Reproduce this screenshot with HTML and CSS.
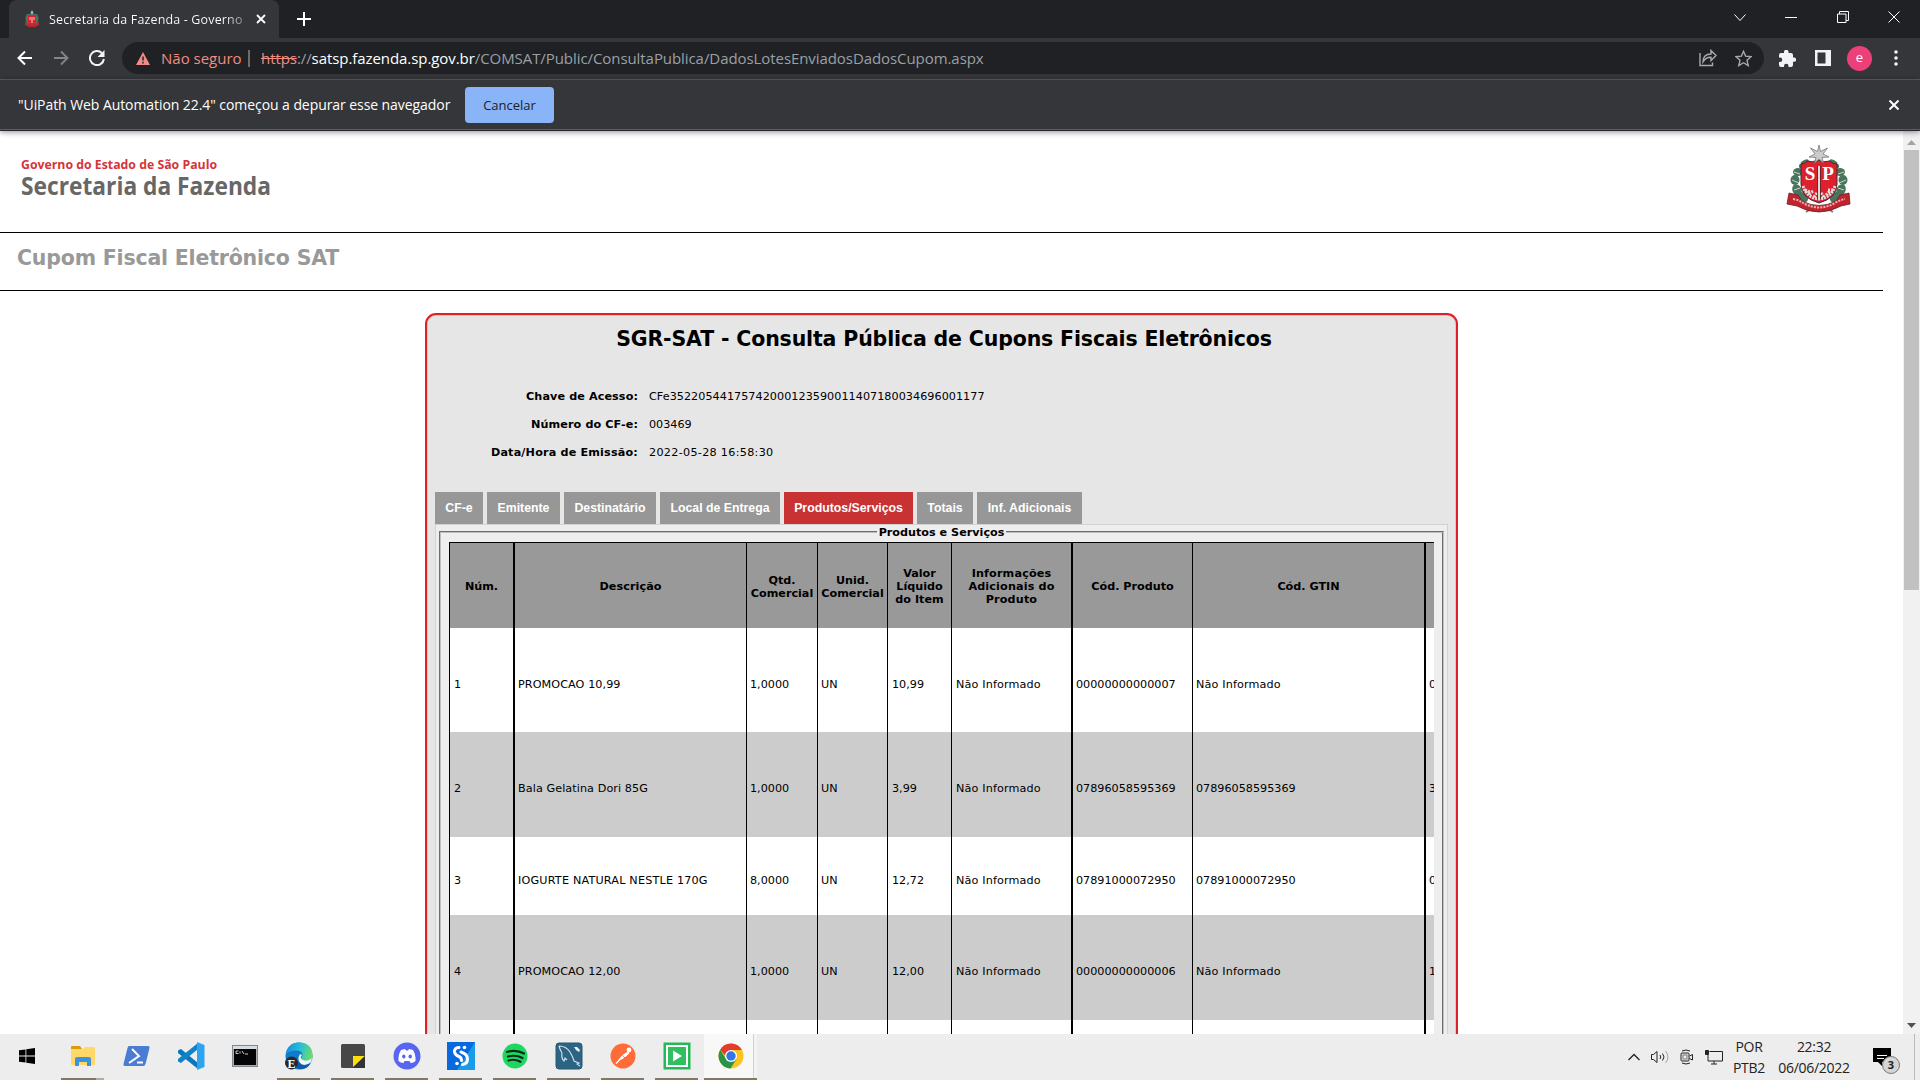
FILE: index.html
```html
<!DOCTYPE html>
<html lang="pt-BR">
<head>
<meta charset="utf-8">
<title>Secretaria da Fazenda - Governo</title>
<link rel="stylesheet" href="styles.css">
</head>
<body>
<svg width="0" height="0" class="defs">
  <symbol id="crest" viewBox="0 0 66 72">
    <g fill="#48755c"><ellipse cx="18" cy="20" rx="6" ry="3.4" transform="rotate(-40 18 20)"/><ellipse cx="12" cy="28" rx="5" ry="4"/><ellipse cx="9" cy="36" rx="4.500" ry="5"/><ellipse cx="11" cy="46" rx="4.500" ry="6" transform="rotate(-25 11 46)"/><ellipse cx="17" cy="53" rx="4" ry="6" transform="rotate(-45 17 53)"/><ellipse cx="48" cy="20" rx="6" ry="3.400" transform="rotate(40 48 20)"/><ellipse cx="54" cy="28" rx="5" ry="4"/><ellipse cx="57" cy="36" rx="4.500" ry="5"/><ellipse cx="55" cy="46" rx="4.500" ry="6" transform="rotate(25 55 46)"/><ellipse cx="49" cy="53" rx="4" ry="6" transform="rotate(45 49 53)"/></g>
    <g fill="none" stroke="#c5d4c7" stroke-width="1"><path d="M14 19l4 5M8 28l6 2M6 36l7 3M8 46l6-2M52 19l-4 5M58 28l-6 2M60 36l-7 3M58 46l-6-2"/></g>
    <path d="M15 20q4 0 6-3q5 2 11-1q6 3 12 1q2 3 7 3v20q0 14-18 19Q15 54 15 40z" fill="#dc202e" stroke="#3d3034" stroke-width="1"/>
    <path d="M17 42q4 12 16 13q12-1 16-13M19 46l5 2M23 50l4-3M42 46l5 0M40 51l4-4M28 53l3-4M38 53l-3-4" stroke="#ddd" stroke-width="3" fill="none" stroke-dasharray="2 1"/>
    <path d="M33 22v33" stroke="#48282c" stroke-width="3.500"/><path d="M33 22v33" stroke="#eee" stroke-width="1.800"/>
    <text x="24" y="36" class="crest-letter">S</text><text x="42" y="36" class="crest-letter">P</text>
    <path d="M33 1l1.500 6.500 7-3.500-4.500 6 6 3-7 .5 1.500 5.500-4.500-4-4.500 4 1.500-5.500-7-.5 6-3-4.500-6 7 3.500z" fill="#c9cbcd" stroke="#777" stroke-width=".8"/>
    <path d="M20 68l8-5 5 3 6-3 8 5" fill="none" stroke="#718575" stroke-width="2"/>
    <path d="M3 49l9 2 4 6q17 9 34 0l4-6 9-2 1 11-9 2q-22 12-44 0l-10-2z" fill="#c0242e" stroke="#6d1f26" stroke-width=".8"/>
    <path d="M7 55q6 1 10 4 16 9 32 0 5-3 10-4" fill="none" stroke="#f3b4b8" stroke-width="2" stroke-dasharray="2 1.200"/>
  </symbol>
</svg>
<div class="screen">
  <header class="tabstrip">
    <div class="tab">
      <svg class="favicon" width="16" height="18" viewBox="0 0 16 18"><path d="M3 4Q0 9 3 14l3 2h4l3-2q3-5 0-10z" fill="#48755c"/><path d="M4 5h8v6q0 3-4 5-4-2-4-5z" fill="#dc202e"/><path d="M6 7v3M8 7v6M10 7v3" stroke="#f5c8cb"/><path d="M8 0l1.500 3-1.500 1.500L6.500 3z" fill="#b9bbbd"/><path d="M1 12l4 2.500h6L15 12v3l-4 2H5l-4-2z" fill="#c0242e"/></svg>
      <span class="tab-title">Secretaria da Fazenda - Governo</span>
      <svg width="10" height="10" viewBox="0 0 10 10" class="s-white"><path d="M1 1l8 8M9 1l-8 8" stroke-width="1.800"/></svg>
    </div>
    <svg class="plus s-white" width="14" height="14" viewBox="0 0 14 14"><path d="M7 0v14M0 7h14" stroke-width="2"/></svg>
    <div class="winctl">
      <svg width="12" height="12" viewBox="0 0 12 12" class="s-white"><path d="M.5 3.500l5.500 6 5.500-6"/></svg>
      <svg width="12" height="12" viewBox="0 0 12 12" class="s-white"><path d="M0 6.500h12"/></svg>
      <svg width="12" height="12" viewBox="0 0 12 12" class="s-white"><path d="M.5 3h8.500v8.500h-8.500zM2.500 3v-2.500h9v9h-2.500"/></svg>
      <svg width="12" height="12" viewBox="0 0 12 12" class="s-white"><path d="M.5.5l11 11M11.500.5l-11 11"/></svg>
    </div>
  </header>
  <div class="toolbar">
    <div class="nav">
      <svg width="16" height="16" viewBox="0 0 16 16" class="s-white"><path d="M15 8H2M8 1.500L1.500 8 8 14.500" stroke-width="2"/></svg>
      <svg width="16" height="16" viewBox="0 0 16 16" class="s-dim"><path d="M1 8h13M8 1.500l6.500 6.500-6.500 6.500" stroke-width="1.800"/></svg>
      <svg width="16" height="16" viewBox="0 0 16 16"><path d="M13 3.200A7 7 0 1 0 14.900 9" fill="none" stroke="#f1f3f4" stroke-width="2"/><path d="M15.500 0v7h-7z" fill="#f1f3f4"/></svg>
    </div>
    <div class="omnibox">
      <svg width="14" height="13" viewBox="0 0 14 13"><path d="M7 0l7 13H0z" fill="#f28b82"/><path d="M7 4.500v4M7 9.800v1.600" stroke="#202124" stroke-width="1.500"/></svg>
      <span class="unsafe">Não seguro</span><i class="vbar"></i>
      <span class="url"><s>https</s>://<b>satsp.fazenda.sp.gov.br</b>/COMSAT/Public/ConsultaPublica/DadosLotesEnviadosDadosCupom.aspx</span>
      <svg class="share" width="18" height="18" viewBox="0 0 18 18"><path d="M1 4v12.500h12.500v-3M4 13q0-8 8-8V1.500l5 5-5 5V8.300q-5-.3-8 4.700z"/></svg>
      <svg class="star" width="17" height="17" viewBox="0 0 17 17"><path d="M8.500 1.300l2.100 4.900 5.400.5-4 3.600 1.200 5.200-4.700-2.800-4.700 2.800L5 10.300 1 6.700l5.400-.5z"/></svg>
    </div>
    <div class="actions">
      <svg width="17" height="17" viewBox="0 0 17 17"><path d="M0 5q0-2 2-2h3V2a2 2 0 0 1 4.500 0v1H12q2 0 2 2v2.500h1a2 2 0 0 1 0 4.300h-1V15q0 2-2 2H9.500v-1a2.200 2.200 0 0 0-4.500 0v1H2q-2 0-2-2v-3h1a2 2 0 0 0 0-4.500H0z" fill="#f1f3f4"/></svg>
      <svg width="16" height="16" viewBox="0 0 16 16"><path fill-rule="evenodd" d="M0 0h16v16H0zM2.500 2.500v11h8v-11z" fill="#f1f3f4"/></svg>
      <span class="avatar">e</span>
      <svg width="4" height="16" viewBox="0 0 4 16" fill="#f1f3f4"><circle cx="2" cy="2" r="1.800"/><circle cx="2" cy="8" r="1.800"/><circle cx="2" cy="14" r="1.800"/></svg>
    </div>
  </div>
  <div class="infobar">
    <span class="info-text">"UiPath Web Automation 22.4" começou a depurar esse navegador</span>
    <span class="cancel">Cancelar</span>
    <svg class="info-close s-white" width="10" height="10" viewBox="0 0 10 10"><path d="M.5.5l9 9M9.500.5l-9 9" stroke-width="2"/></svg>
  </div>
  <div class="viewport">
    <main class="page">
      <div class="brand">
        <svg class="logo" width="260" height="46"><text x="0" y="12" class="logo-top" textLength="196" lengthAdjust="spacingAndGlyphs">Governo do Estado de São Paulo</text><text x="0" y="37.500" class="logo-main" textLength="250" lengthAdjust="spacingAndGlyphs">Secretaria da Fazenda</text></svg>
        <svg class="crest" width="66" height="72"><use href="#crest"/></svg>
      </div>
      <h1 class="system">Cupom Fiscal Eletrônico SAT</h1>
      <section class="card">
        <h2 class="card-title">SGR-SAT - Consulta Pública de Cupons Fiscais Eletrônicos</h2>
        <dl class="meta">
          <dt>Chave de Acesso:</dt><dd class="key">CFe35220544175742000123590011407180034696001177</dd>
          <dt>Número do CF-e:</dt><dd>003469</dd>
          <dt>Data/Hora de Emissão:</dt><dd class="stamp">2022-05-28 16:58:30</dd>
        </dl>
        <nav class="tabs"><a>CF-e</a><a>Emitente</a><a>Destinatário</a><a>Local de Entrega</a><a class="on">Produtos/Serviços</a><a>Totais</a><a>Inf. Adicionais</a></nav>
        <div class="panel">
          <fieldset class="group">
            <legend>Produtos e Serviços</legend>
            <div class="grid">
              <div class="row head"><span>Núm.</span><span>Descrição</span><span>Qtd.<br>Comercial</span><span>Unid.<br>Comercial</span><span>Valor<br>Líquido<br>do Item</span><span>Informações<br>Adicionais do<br>Produto</span><span>Cód. Produto</span><span>Cód. GTIN</span><span></span></div>
              <div class="row"><span>1</span><span>PROMOCAO 10,99</span><span>1,0000</span><span>UN</span><span>10,99</span><span>Não Informado</span><span>00000000000007</span><span class="words">Não Informado</span><span>0</span></div>
              <div class="row alt"><span>2</span><span>Bala Gelatina Dori 85G</span><span>1,0000</span><span>UN</span><span>3,99</span><span>Não Informado</span><span>07896058595369</span><span>07896058595369</span><span>3</span></div>
              <div class="row"><span>3</span><span class="wide">IOGURTE NATURAL NESTLE 170G</span><span>8,0000</span><span>UN</span><span>12,72</span><span>Não Informado</span><span>07891000072950</span><span>07891000072950</span><span>0</span></div>
              <div class="row alt"><span>4</span><span>PROMOCAO 12,00</span><span>1,0000</span><span>UN</span><span>12,00</span><span>Não Informado</span><span>00000000000006</span><span class="words">Não Informado</span><span>1</span></div>
              <div class="row"><span></span><span></span><span></span><span></span><span></span><span></span><span></span><span></span><span></span></div>
            </div>
          </fieldset>
        </div>
      </section>
    </main>
    <div class="scroll">
      <svg width="9" height="5" viewBox="0 0 9 5"><path d="M0 5l4.500-5L9 5z" fill="#a3a3a3"/></svg>
      <i class="thumb"></i>
      <svg width="9" height="5" viewBox="0 0 9 5"><path d="M0 0l4.500 5L9 0z" fill="#505050"/></svg>
    </div>
  </div>
  <footer class="taskbar">
    <div class="apps">
      <span class="app start"><svg width="16" height="16" viewBox="0 0 16 16"><path d="M0 2.300l6.500-.9v6.200H0zM7.300 1.300L16 0v7.600H7.300zM0 8.400h6.500v6.200L0 13.700zM7.300 8.400H16V16l-8.700-1.300z"/></svg></span>
      <span class="app run multi"><svg width="26" height="26" viewBox="0 0 26 26"><path d="M1 4q0-1 1-1h8l2 3H1z" fill="#dd9b09"/><path d="M1 6h12l2-2h9q1 0 1 1v16q0 1-1 1H2q-1 0-1-1z" fill="#ffd869"/><path d="M5 23v-7q0-2 2-2h12q2 0 2 2v7h-4v-4H9v4z" fill="#3e94da"/></svg></span>
      <span class="app"><svg width="28" height="26" viewBox="0 0 28 26"><path d="M6 3h19q2 0 1.500 2l-4 16q-.5 2-2.500 2H2q-2 0-1.500-2l4-16Q5 3 6 3z" fill="#4a7bd5"/><path d="M9 6l7 7L6 20M14 19.500h6" fill="none" stroke="#fff" stroke-width="2"/></svg></span>
      <span class="app"><svg width="28" height="28" viewBox="0 0 28 28"><path d="M1 8.500l3-1.500 17 14v6L1 11z" fill="#0876b9"/><path d="M1 19.500L4 21 21 7V1L1 17z" fill="#0e83cd"/><path d="M20 0l7.500 3v22L20 28z" fill="#2ea4f0"/></svg></span>
      <span class="app"><svg width="26" height="22" viewBox="0 0 26 22"><rect x=".5" y=".5" width="25" height="21" fill="#a9afb5" stroke="#80878d"/><path d="M1 1h24v3H1z" fill="#d7dde2"/><path d="M2 4h22v16H2z" fill="#050505"/><path d="M6.500 6H4v2.500h2.500M8 6.500v2M10 6l2 3M13 9h3" stroke="#ccc" fill="none"/></svg></span>
      <span class="app run"><svg width="28" height="28" viewBox="0 0 28 28"><defs><linearGradient id="eg" x1="0" y1=".3" x2="1" y2=".5"><stop offset="0" stop-color="#1690d7"/><stop offset=".5" stop-color="#27bedb"/><stop offset="1" stop-color="#6bdc65"/></linearGradient></defs><circle cx="14" cy="14" r="13.500" fill="#0f7bd0"/><path d="M1 12Q3 0 15 .5q13 1 12.500 14-1 6-9 4-4-1-1-5 0-5-6-5Q5 8 1 12z" fill="url(#eg)"/><path d="M15 12q-4 6 2 11 5 1 9-3l1-4q-4 4-9 2-4-2-1-5z" fill="#eef6fa"/><path d="M12 26q8 4 14-5-6 4-12 0-4-4-2-8-5 7 0 13z" fill="#1359a8"/><circle cx="6.500" cy="21" r="6.500" fill="#292929"/><text x="6.500" y="25.500" class="badge-e">E</text></svg></span>
      <span class="app run"><svg width="26" height="26" viewBox="0 0 26 26"><rect x="1" y="1" width="24" height="24" rx="1.500" fill="#474747"/><path d="M13 13h12L13 24z" fill="#ffdf08"/><path d="M25 13L13 25h12z" fill="#333"/></svg></span>
      <span class="app run"><svg width="28" height="28" viewBox="0 0 28 28"><circle cx="14" cy="14" r="13.500" fill="#5865f2"/><path d="M8 8l4-1 1 1.500h2L16 7l4 1q3 5 2.500 11-2 2-5 2l-1-2h-5l-1 2q-3 0-5-2Q5 13 8 8z" fill="#fff"/><ellipse cx="10.800" cy="14.500" rx="1.700" ry="2" fill="#5865f2"/><ellipse cx="17.200" cy="14.500" rx="1.700" ry="2" fill="#5865f2"/></svg></span>
      <span class="app run"><svg width="28" height="28" viewBox="0 0 28 28"><path d="M0 0h28v28H0z" fill="#0869de"/><path d="M28 0v28H10z" fill="#189ce9"/><path d="M12 5.500Q7 6 7.500 10q.5 3 4.500 4.500 2.500 1 2.500 4M14 10q6.500 2 6.500 7 0 5-5 5.500" fill="none" stroke="#fff" stroke-width="3" stroke-linecap="round"/><circle cx="17.500" cy="5.500" r="1.800" fill="#fff"/><circle cx="10" cy="21.500" r="1.800" fill="#fff"/></svg></span>
      <span class="app run"><svg width="26" height="26" viewBox="0 0 26 26"><circle cx="13" cy="13" r="12.500" fill="#1ed760"/><path d="M5 9q9-3 17 1.500M6 13.500q8-2 14.500 1.500M6.500 17.500q6-2 12 1.300" fill="none" stroke="#112a19" stroke-width="2.200" stroke-linecap="round"/></svg></span>
      <span class="app run"><svg width="28" height="28" viewBox="0 0 28 28"><rect x="1" y="1" width="26" height="26" rx="3" fill="#2c6484" stroke="#285671"/><path d="M4 4q7 0 11 6 3 5 4 9l5 2-2 1 3 2M4 4q1 4 3 7-1 5 2 8l1-3 2 2" fill="none" stroke="#d6e4ed" stroke-width="1.100"/><path d="M19 5l3 0 3 3-1 2-3-2z" fill="#eef"/></svg></span>
      <span class="app run"><svg width="26" height="26" viewBox="0 0 26 26"><circle cx="13" cy="13" r="12.500" fill="#ff6c37"/><path d="M18 9l-5 3 2 2 4-4zM12.500 12.500L8 18l6-3.500" fill="#fff" stroke="#fff"/><path d="M6 20.500l3-3" stroke="#fff" stroke-width="1.500"/><circle cx="19" cy="7" r="2.400" fill="#fff"/></svg></span>
      <span class="app run"><svg width="28" height="28" viewBox="0 0 28 28"><path d="M.5.5h27v27H.5z" fill="#25b857"/><path d="M4 4h20v20H4z" fill="#2fbf60" stroke="#fff" stroke-width="2"/><path d="M10 8.500l9 5.500-9 5.500z" fill="#fff"/></svg></span>
      <span class="app run active"><svg width="26" height="26" viewBox="0 0 26 26"><circle cx="13" cy="13" r="12.500" fill="#fcc31e"/><path d="M2.200 6.700A12.500 12.500 0 0 1 23.900 7H13v12z" fill="#e33b2e"/><path d="M2.200 6.700A12.500 12.500 0 0 0 12.500 25.500l6-9.500L8 16z" fill="#299447"/><circle cx="13" cy="13" r="6" fill="#fff"/><circle cx="13" cy="13" r="4.700" fill="#3177e8"/></svg></span>
    </div>
    <div class="tray">
      <svg width="12" height="8" viewBox="0 0 12 8" class="s-dark"><path d="M.5 7L6 1.500 11.500 7" stroke-width="1.300"/></svg>
      <svg width="18" height="16" viewBox="0 0 18 16" class="s-dark"><path d="M.5 5.500h2L6 2.500v11l-3.500-3h-2zM9 6q1.500 2 0 4M11.500 4.500q3 3.500 0 7"/><path d="M14.500 2q5 6 0 12" opacity=".35"/></svg>
      <svg width="14" height="16" viewBox="0 0 14 16" class="s-dark"><rect x="1" y="4" width="8" height="8" rx="1"/><rect x="3" y="6" width="4" height="4" stroke="#777"/><path d="M9.500 7l3-1.500v5.500l-3-1.500M2 2q4-2 8 0M2 14q4 2 8 0"/></svg>
      <svg width="18" height="15" viewBox="0 0 18 15" class="s-dark"><path d="M4.500 1.500H17.500v9.500H3V5M6 14h6M9 11v3"/><path d="M.5.500h3v4h-3z" fill="#222"/></svg>
      <span class="two lang">POR<br>PTB2</span>
      <span class="two clock">22:32<br>06/06/2022</span>
      <span class="notify"><svg width="18" height="18" viewBox="0 0 18 18"><path d="M0 0h18v14h-9v4l-4-4H0z"/><path d="M4 7.500h10M4 10.500h7" stroke="#fff"/></svg><b class="count">3</b></span>
      <i class="peek"></i>
    </div>
  </footer>
</div>
</body>
</html>
```
FILE: styles.css
```css
* { box-sizing: border-box; }
body { margin: 0; overflow: hidden; background: #fff; }
svg { display: block; flex: none; }
.defs { position: absolute; }
.screen { width: 1920px; height: 1080px; display: flex; flex-direction: column; overflow: hidden; font-family: "Open Sans", "Noto Sans", sans-serif; }
.s-white { fill: none; stroke: #fff; }
.s-dim { fill: none; stroke: #84868a; }
.s-dark { fill: none; stroke: #222; }

.tabstrip { height: 38px; flex: none; background: #202124; display: flex; align-items: center; padding-left: 9px; }
.tab { width: 270px; height: 38px; background: #35363a; border-radius: 8px 8px 0 0; display: flex; align-items: center; padding-left: 15px; color: #fff; font-size: 12.500px; }
.favicon { margin-right: 9px; }
.tab-title { width: 197px; margin-right: 10px; white-space: nowrap; letter-spacing: .15px; background: linear-gradient(90deg, #fff 175px, #777 197px); background-clip: text; color: transparent; }
.plus { margin-left: 18px; }
.winctl { margin-left: auto; display: flex; gap: 39.500px; padding-right: 20px; margin-top: -5px; }

.toolbar { height: 42px; flex: none; background: #35363a; border-bottom: 1px solid #5f6165; display: flex; align-items: center; padding-bottom: 1px; }
.nav { width: 122px; padding-left: 17px; display: flex; gap: 20px; }
.omnibox { width: 1642px; height: 32px; border-radius: 16px; background: #202124; display: flex; align-items: center; padding-left: 14px; font-size: 15px; }
.unsafe { color: #f28b82; margin-left: 11px; width: 83px; letter-spacing: 0; white-space: nowrap; }
.vbar { width: 2px; height: 17px; background: #6b6d70; margin: 0 11px 0 4px; }
.url { color: #9aa0a6; white-space: nowrap; letter-spacing: -.07px; }
.url s { color: #f28b82; }
.url b { color: #fff; font-weight: 400; }
.share, .star { fill: none; stroke: #a7aaad; stroke-width: 1.400; }
.share { margin-left: auto; margin-right: 18px; }
.star { margin-right: 12px; }
.actions { display: flex; align-items: center; margin-left: 15px; }
.actions svg + svg { margin-left: 19px; }
.avatar { width: 25px; height: 25px; border-radius: 50%; background: #ec407a; color: #fff; font-size: 13px; line-height: 23px; text-align: center; margin-left: 16px; margin-right: 22px; }

.infobar { height: 51px; flex: none; background: #35363a; border-bottom: 1px solid #2b2830; box-shadow: inset 0 -1px #5b5c60, 0 1px 6px rgba(0,0,0,.45); position: relative; display: flex; align-items: center; padding: 0 20px 0 18px; color: #fff; font-size: 14px; }
.info-text { width: 432px; white-space: nowrap; letter-spacing: -.07px; padding-bottom: 1px; }
.cancel { margin-left: 15px; width: 89px; height: 36px; border-radius: 4px; background: #8ab4f8; color: #202124; font-size: 13px; line-height: 36px; text-align: center; letter-spacing: 0; }
.info-close { margin-left: auto; margin-right: 1px; }

.viewport { height: 903px; flex: none; display: flex; overflow: hidden; background: #fff; }
.page { width: 1883px; margin-right: 20px; font-family: "DejaVu Sans", Verdana, sans-serif; color: #000; }
.brand { height: 102px; border-bottom: 1px solid #000; display: flex; justify-content: space-between; padding: 26px 0 0 21px; }
.logo { overflow: visible; }
.crest { margin: -13px 31px 0 0; }
.logo-top, .logo-main { font-family: "Open Sans", sans-serif; font-weight: 700; }
.logo-top { font-size: 12.500px; fill: #d63438; }
.logo-main { font-size: 25.500px; fill: #676767; }
.crest-letter { font: 700 19px "Liberation Serif", serif; fill: #fff; text-anchor: middle; }
.badge-e { font: 700 12px "Liberation Serif", serif; fill: #fff; text-anchor: middle; }
.system { margin: 0; height: 58px; border-bottom: 1px solid #000; padding: 12px 0 0 17px; font-size: 20.500px; line-height: 26px; letter-spacing: -.19px; color: #999; }

.card { width: 1033px; height: 800px; margin: 22px 0 0 425px; border: 2px solid #dc2226; border-radius: 11px; background: #e6e6e6; box-shadow: inset 0 0 0 1px #e6c4c5; padding: 11px 8px 0; }
.card-title { margin: 0; text-align: center; padding-left: 5px; font-size: 20.500px; line-height: 26px; letter-spacing: -.15px; }
.meta { margin: 31px 0 0; display: grid; grid-template-columns: 203px auto; column-gap: 11px; grid-auto-rows: 28px; line-height: 28px; font-size: 11.200px; height: 84px; }
.meta dt { font-weight: 700; text-align: right; white-space: nowrap; letter-spacing: .1px; }
.meta dt:last-of-type { letter-spacing: .17px; }
.meta dd { margin: 0; }
.meta .key { letter-spacing: .04px; }
.meta .stamp { letter-spacing: .3px; }
.tabs { display: flex; gap: 4px; margin-top: 25px; height: 32px; }
.tabs a { background: #979797; color: #fff; font: 700 12.300px/32px "Liberation Sans", Arial, sans-serif; text-align: center; width: 48px; white-space: nowrap; }
.tabs a:nth-child(2) { width: 73px; }
.tabs a:nth-child(3) { width: 92px; }
.tabs a:nth-child(4) { width: 120px; }
.tabs a:nth-child(5) { width: 129px; }
.tabs a:nth-child(6) { width: 56px; }
.tabs a:nth-child(7) { width: 105px; }
.tabs .on { background: #c83232; }
.panel { width: 1013px; height: 600px; border: 1px solid #d2d2d2; background: #eee; padding: 0 3px; }
.group { margin: 0; border: 2px groove #c0c0c0; padding: 0 8px; min-width: 0; height: 620px; }
.group legend { margin: 0 auto; padding: 1px 2px 0; font-size: 11.200px; font-weight: 700; line-height: 13px; }
.grid { width: 985px; overflow: hidden; border-top: 1px solid #000; border-left: 1px solid #000; margin-top: 3px; font-size: 11.200px; }
.row { display: grid; grid-template-columns: 65px 232px 71px 70px 64px 121px 120px 233px 60px; height: 105px; background: #fff; line-height: 13px; }
.row span { display: flex; align-items: center; border-right: 1px solid #000; padding: 8px 0 0 4px; white-space: nowrap; }
.row span:nth-child(1), .row span:nth-child(6), .row span:nth-child(8) { border-right-width: 2px; }
.row span:nth-child(2) { padding-left: 3px; letter-spacing: .08px; }
.row .wide:nth-child(2) { letter-spacing: .19px; }
.row span:nth-child(n+3) { padding-left: 3px; }
.row span:nth-child(5), .row span:nth-child(6) { padding-left: 4px; }
.row span:nth-child(6), .row .words { letter-spacing: .15px; }
.row:nth-child(2) { height: 104px; }
.row:nth-child(4) { height: 78px; }
.alt { background: #ccc; }
.head { height: 85px; background: #999; font-weight: 700; }
.row.head span:nth-child(n) { justify-content: center; text-align: center; padding: 2px 0 0; }

.scroll { width: 17px; background: #f1f1f1; display: flex; flex-direction: column; align-items: center; padding: 9px 0 6px; }
.thumb { width: 15px; height: 440px; background: #c1c1c1; margin-top: 5px; margin-bottom: auto; }

.taskbar { height: 46px; flex: none; background: #ededed; display: flex; justify-content: space-between; }
.apps { display: flex; padding-left: 5px; gap: 11px; }
.app { width: 43px; height: 46px; display: flex; align-items: center; justify-content: center; border-bottom: 2px solid transparent; }
.start { margin-right: 2px; }
.run { border-bottom-color: #857863; }
.multi { border-image: linear-gradient(90deg, #857863 34px, #b3aa9b 34px) 2; border-image-width: 0 0 2px; }
.active { width: 53px; margin-left: -5px; background: linear-gradient(90deg, #f8f8f8 49px, #d2d2d2 49px, #d2d2d2 50px, #f3f3f3 50px); }
.tray { display: flex; align-items: center; color: #222; }
.tray svg { margin-right: 11px; }
.two { font-size: 14px; line-height: 21px; text-align: center; letter-spacing: -.3px; }
.lang { width: 34px; margin-left: -2px; }
.clock { width: 80px; margin: 0 19px 0 8px; }
.notify { position: relative; width: 41px; }
.tray .notify svg { margin: 0; }
.count { position: absolute; left: 9px; top: 8px; width: 18px; height: 18px; border: 1px solid #777; border-radius: 50%; background: #d5d5d5; font-size: 11px; line-height: 16px; text-align: center; }
.peek { width: 6px; height: 46px; border-left: 1px solid #bbb; }
```
